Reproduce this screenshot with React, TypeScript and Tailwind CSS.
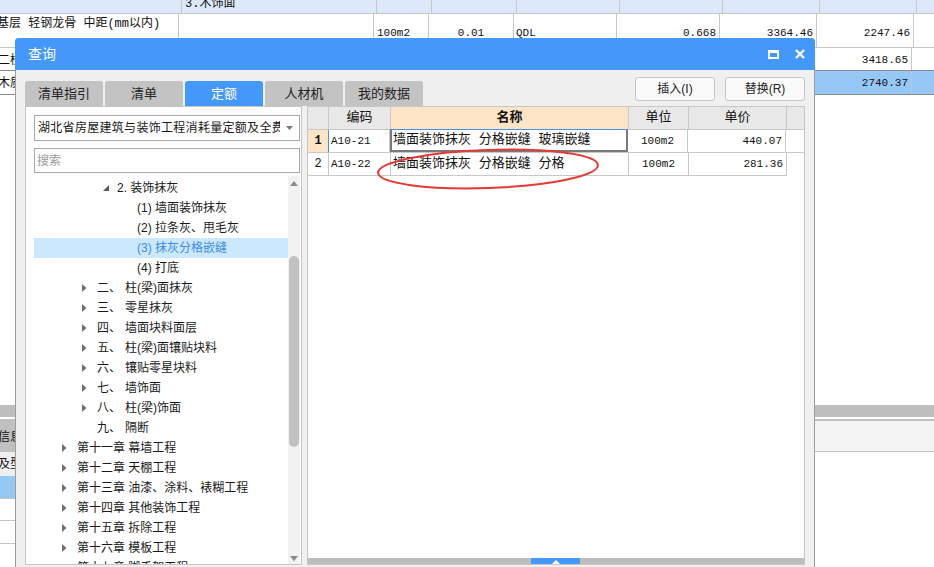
import React from "react";

const sans = "font-['Liberation_Sans','Noto_Sans_CJK_SC',sans-serif]";
const mono = "font-['Liberation_Mono','Noto_Sans_CJK_SC',monospace]";

type TreeRow =
  | { kind: "sub"; label: string }
  | { kind: "item"; label: string; selected?: boolean }
  | { kind: "section"; num: string; label: string; arrow: boolean }
  | { kind: "chapter"; label: string };

const treeRows: TreeRow[] = [
  { kind: "sub", label: "2. 装饰抹灰" },
  { kind: "item", label: "(1) 墙面装饰抹灰" },
  { kind: "item", label: "(2) 拉条灰、甩毛灰" },
  { kind: "item", label: "(3) 抹灰分格嵌缝", selected: true },
  { kind: "item", label: "(4) 打底" },
  { kind: "section", num: "二、", label: "柱(梁)面抹灰", arrow: true },
  { kind: "section", num: "三、", label: "零星抹灰", arrow: true },
  { kind: "section", num: "四、", label: "墙面块料面层", arrow: true },
  { kind: "section", num: "五、", label: "柱(梁)面镶贴块料", arrow: true },
  { kind: "section", num: "六、", label: "镶贴零星块料", arrow: true },
  { kind: "section", num: "七、", label: "墙饰面", arrow: true },
  { kind: "section", num: "八、", label: "柱(梁)饰面", arrow: true },
  { kind: "section", num: "九、", label: "隔断", arrow: false },
  { kind: "chapter", label: "第十一章 幕墙工程" },
  { kind: "chapter", label: "第十二章 天棚工程" },
  { kind: "chapter", label: "第十三章 油漆、涂料、裱糊工程" },
  { kind: "chapter", label: "第十四章 其他装饰工程" },
  { kind: "chapter", label: "第十五章 拆除工程" },
  { kind: "chapter", label: "第十六章 模板工程" },
  { kind: "chapter", label: "第十七章 脚手架工程" },
];

const Closed = () => (
  <svg width="5" height="8" viewBox="0 0 5 8" className="shrink-0">
    <path d="M0 0 L4.5 4 L0 8 Z" fill="#6f6f6f" />
  </svg>
);

const Open = () => (
  <svg width="6" height="6" viewBox="0 0 6 6" className="shrink-0">
    <path d="M6 0 L6 6 L0 6 Z" fill="#5a5a5a" />
  </svg>
);

const Row = ({ row }: { row: TreeRow }) => {
  if (row.kind === "sub") {
    return (
      <div className="h-[20px] ml-[8px] flex items-center pl-[69px]">
        <span className="w-[14px] flex items-center">
          <Open />
        </span>
        <span>{row.label}</span>
      </div>
    );
  }
  if (row.kind === "item") {
    return (
      <div
        className={
          row.selected
            ? "h-[20px] ml-[8px] flex items-center pl-[103px] bg-[#cce8ff] text-[#3a8ee6]"
            : "h-[20px] ml-[8px] flex items-center pl-[103px]"
        }
      >
        {row.label}
      </div>
    );
  }
  if (row.kind === "section") {
    return (
      <div className="h-[20px] ml-[8px] flex items-center pl-[48px]">
        <span className="w-[15px] flex items-center">{row.arrow && <Closed />}</span>
        <span className="w-[28px]">{row.num}</span>
        <span>{row.label}</span>
      </div>
    );
  }
  return (
    <div className="h-[20px] ml-[8px] flex items-center pl-[28px]">
      <span className="w-[15px] flex items-center">
        <Closed />
      </span>
      <span>{row.label}</span>
    </div>
  );
};

const Background = () => (
  <div className={`flex flex-col h-full ${mono} text-[11px] text-[#111]`}>
    {/* header strip */}
    <div className="flex h-[14px] bg-[#dde9fa] border-b border-[#c6c6c6] overflow-hidden">
      <div className="w-[182px] border-r border-[#c8c8c8]" />
      <div className="w-[195px] border-r border-[#c8c8c8] pl-[3px] -mt-[3px] leading-[14px] text-[12px]">3.木饰面</div>
      <div className="w-[55px] border-r border-[#c8c8c8]" />
      <div className="w-[85px] border-r border-[#c8c8c8]" />
      <div className="w-[103px] border-r border-[#c8c8c8]" />
      <div className="w-[103px] border-r border-[#c8c8c8]" />
      <div className="w-[97px] border-r border-[#c8c8c8]" />
      <div className="w-[97px] border-r border-[#c8c8c8]" />
      <div className="flex-1" />
    </div>
    <div className="flex h-[34px] border-b border-[#c6c6c6]">
      <div className="w-[182px] border-r border-[#c8c8c8] pt-[3px] -ml-[3px] whitespace-nowrap text-[12px] leading-[14px]">
        基层 轻钢龙骨 中距(mm以内)
      </div>
      <div className="w-[195px] border-r border-[#c8c8c8]" />
      <div className="w-[55px] border-r border-[#c8c8c8] pt-[11px] pl-[3px]">100m2</div>
      <div className="w-[85px] border-r border-[#c8c8c8] pt-[11px] text-center">0.01</div>
      <div className="w-[103px] border-r border-[#c8c8c8] pt-[11px] pl-[2px]">QDL</div>
      <div className="w-[103px] border-r border-[#c8c8c8] pt-[11px] pr-[3px] text-right">0.668</div>
      <div className="w-[97px] border-r border-[#c8c8c8] pt-[11px] pr-[3px] text-right">3364.46</div>
      <div className="w-[97px] border-r border-[#c8c8c8] pt-[11px] pr-[3px] text-right">2247.46</div>
      <div className="flex-1" />
    </div>
    <div className="flex h-[23px] border-b border-[#8a8a8a]">
      <div className="w-[182px] -ml-[2px] pt-[4px] text-[12px] whitespace-nowrap">二桢</div>
      <div className="w-[538px]" />
      <div className="w-[97px] border-r border-[#c8c8c8]" />
      <div className="w-[97px] border-r border-[#c8c8c8] pt-[4px] pr-[3px] text-right">3418.65</div>
      <div className="flex-1" />
    </div>
    <div className="flex h-[24px] border-b border-[#8a8a8a]">
      <div className="w-[182px] bg-white -ml-[2px] pt-[4px] text-[12px] whitespace-nowrap">木质</div>
      <div className="flex-1 flex bg-[#96c8f5]">
        <div className="w-[538px]" />
        <div className="w-[97px] border-r border-[#b8c8d8]" />
        <div className="w-[97px] border-r border-[#b8c8d8] pt-[4px] pr-[3px] text-right">2740.37</div>
        <div className="flex-1" />
      </div>
    </div>
    <div className="flex-1" />
    <div className="h-[12px] bg-[#bebebe]" />
    <div className="h-[2px] bg-white" />
    <div className="flex h-[33px]">
      <div className="w-[40px] bg-[#c0c0c0] pt-[10px] text-[12px] -ml-[2px]">信息</div>
      <div className="flex-1 bg-[#f4f4f4] border-t-2 border-[#bebebe] border-b border-b-[#c4c4c4]" />
    </div>
    <div className="flex h-[24px]">
      <div className="w-[40px] bg-[#efefef] pt-[4px] text-[12px] -ml-[2px]">及型</div>
      <div className="flex-1" />
    </div>
    <div className="h-[23px] w-[40px] bg-[#96c8f5] border-b border-[#c4c4c4]" />
    <div className="h-[22px] w-[40px] border-b border-[#c4c4c4]" />
    <div className="h-[23px] w-[40px] border-b border-[#c4c4c4]" />
    <div className="h-[23px]" />
  </div>
);

export default function App() {
  const tabs = ["清单指引", "清单", "定额", "人材机", "我的数据"];
  return (
    <div className={`relative w-[934px] h-[567px] overflow-hidden bg-white ${sans}`}>
      <Background />

      {/* dialog window */}
      <div className="absolute left-[15px] top-[38px] w-[800px] h-[560px] flex flex-col bg-[#f0f0f0] border-x border-[#9c9c9c] rounded-t-[4px]">
        <div className="h-[32px] -mx-px bg-[#4398fa] rounded-t-[4px] flex items-center pl-[13px] pr-[9px] text-white">
          <span className="text-[14px]">查询</span>
          <div className="flex-1" />
          <span className="w-[11px] h-[9px] border-2 border-t-[3px] border-white mr-[16px]" />
          <svg width="10" height="10" viewBox="0 0 10 10" className="mr-[1px]">
            <path d="M1 1 L9 9 M9 1 L1 9" stroke="white" strokeWidth="2.4" />
          </svg>
        </div>

        <div className="flex items-start pt-[7px] px-[9px] h-[36px]">
          <div className="flex gap-[2px] mt-[4px]">
            {tabs.map((t) => (
              <div
                key={t}
                className={
                  t === "定额"
                    ? "w-[78px] h-[25px] rounded-t-[3px] bg-[#4398fa] text-white text-[13px] flex items-center justify-center"
                    : "w-[78px] h-[25px] rounded-t-[3px] bg-[#c3c3c3] text-[#222] text-[13px] flex items-center justify-center"
                }
              >
                {t}
              </div>
            ))}
          </div>
          <div className="flex-1" />
          <button className="w-[80px] h-[24px] border border-[#c6c6c6] rounded-[3px] bg-[#fafafa] text-[12px] text-[#222]">
            插入(I)
          </button>
          <button className="w-[80px] h-[24px] ml-[10px] border border-[#c6c6c6] rounded-[3px] bg-[#fafafa] text-[12px] text-[#222]">
            替换(R)
          </button>
        </div>

        <div className="flex px-[9px] gap-[5px]">
          {/* tree panel */}
          <div className="w-[277px] h-[459px] bg-white border border-[#c6c6c6] flex flex-col">
            <div className="pl-[8px] pr-[1px] pt-[8px]">
              <div className="h-[26px] border border-[#a8a8a8] flex items-center pl-[3px] pr-[6px]">
                <span className="flex-1 overflow-hidden whitespace-nowrap text-[12px] tracking-[0.3px] text-[#1a1a1a]">
                  湖北省房屋建筑与装饰工程消耗量定额及全费用基价表(2018)
                </span>
                <svg width="7" height="4" viewBox="0 0 7 4" className="ml-[6px]">
                  <path d="M0 0 L7 0 L3.5 4 Z" fill="#777" />
                </svg>
              </div>
              <div className="h-[25px] mt-[7px] border border-[#a8a8a8] flex items-center pl-[2px] text-[12px] text-[#9a9a9a]">
                搜索
              </div>
            </div>
            <div className="flex flex-1 mt-[3px] overflow-hidden">
              <div className="flex-1 overflow-hidden pt-[2px] text-[12px] text-[#1a1a1a] whitespace-nowrap">
                {treeRows.map((r, i) => (
                  <Row key={i} row={r} />
                ))}
              </div>
              <div className="w-[12px] mr-[1px] bg-[#f2f2f2] flex flex-col items-center">
                <div className="h-[14px] flex items-center">
                  <svg width="8" height="5" viewBox="0 0 8 5">
                    <path d="M0 5 L4 0 L8 5 Z" fill="#8a8a8a" />
                  </svg>
                </div>
                <div className="h-[66px]" />
                <div className="w-[10px] h-[191px] rounded-full bg-[#c1c1c1]" />
                <div className="flex-1" />
                <div className="h-[12px] flex items-center">
                  <svg width="8" height="5" viewBox="0 0 8 5">
                    <path d="M0 0 L8 0 L4 5 Z" fill="#8a8a8a" />
                  </svg>
                </div>
              </div>
            </div>
          </div>

          {/* result panel */}
          <div className="relative w-[498px] h-[459px] bg-white border border-[#c6c6c6] flex flex-col">
            <div className={`${mono} text-[11px] text-[#111]`}>
              <div className="flex h-[23px] bg-[#e8e8e8] border-b border-[#c8c8c8] text-[13px]">
                <div className="w-[21px] border-r border-[#c8c8c8]" />
                <div className="w-[62px] border-r border-[#c8c8c8] flex items-center justify-center">编码</div>
                <div className="w-[238px] border-r border-[#c8c8c8] bg-[#fde4c6] font-bold flex items-center justify-center">名称</div>
                <div className="w-[60px] border-r border-[#c8c8c8] flex items-center justify-center">单位</div>
                <div className="w-[98px] border-r border-[#c8c8c8] flex items-center justify-center">单价</div>
              </div>
              <div className="flex h-[23px] border-b border-[#c8c8c8]">
                <div className="w-[21px] border-r border-[#c8c8c8] bg-[#fde4c6] font-bold text-[12px] flex items-center justify-center">1</div>
                <div className="w-[62px] border-r border-[#c8c8c8] border-l border-l-[#4a90e2] -ml-px flex items-center pl-[2px]">A10-21</div>
                <div className="w-[238px] border-t border-t-[#4a90e2] border-l-2 border-b-2 border-r-2 border-[#7a7a7a] -mt-px flex items-center pl-px text-[13px] whitespace-nowrap">
                  墙面装饰抹灰 分格嵌缝 玻璃嵌缝
                </div>
                <div className="w-[60px] border-r border-[#c8c8c8] flex items-center justify-center">100m2</div>
                <div className="w-[98px] border-r border-[#c8c8c8] flex items-center justify-end pr-[3px]">440.07</div>
              </div>
              <div className="flex h-[23px] border-b border-[#c8c8c8] w-[479px]">
                <div className="w-[21px] border-r border-[#c8c8c8] flex items-center justify-center text-[12px]">2</div>
                <div className="w-[62px] border-r border-[#c8c8c8] flex items-center pl-[2px]">A10-22</div>
                <div className="w-[238px] border-r border-[#c8c8c8] flex items-center pl-[2px] text-[13px] whitespace-nowrap">
                  墙面装饰抹灰 分格嵌缝 分格
                </div>
                <div className="w-[60px] border-r border-[#c8c8c8] flex items-center justify-center">100m2</div>
                <div className="w-[98px] border-r border-[#c8c8c8] flex items-center justify-end pr-[3px]">281.36</div>
              </div>
            </div>
            <div className="flex-1" />
            <div className="h-[6px] bg-[#bdbdbd] flex">
              <div className="w-[223px]" />
              <div className="w-[49px] bg-[#4398fa] flex items-end justify-center">
                <svg width="8" height="4" viewBox="0 0 8 4">
                  <path d="M0 4 L4 0 L8 4 Z" fill="white" />
                </svg>
              </div>
            </div>
            <svg className="absolute left-0 top-0 pointer-events-none" width="496" height="120">
              <ellipse cx="180" cy="62" rx="110" ry="19" fill="none" stroke="#e53935" strokeWidth="2" transform="rotate(-2 180 62)" />
            </svg>
          </div>
        </div>
      </div>
    </div>
  );
}
